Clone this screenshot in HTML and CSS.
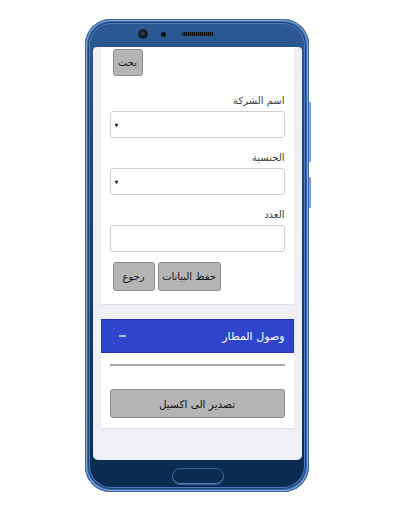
FILE: index.html
```html
<!DOCTYPE html>
<html lang="ar">
<head>
<meta charset="utf-8">
<link rel="stylesheet" href="styles.css">
<title>وصول المطار</title>
</head>
<body>
<div class="phone">
  <span class="side-btn vol"></span>
  <span class="side-btn power"></span>
  <div class="bezel-top">
    <span class="camera"></span>
    <span class="sensor"></span>
    <span class="speaker"></span>
  </div>
  <div class="screen" dir="rtl">
    <div class="card form-card">
      <div class="btn-row">
        <button class="btn btn-small">بحث</button>
      </div>
      <label class="field-label">اسم الشركة</label>
      <div class="field select"><span class="caret">▼</span></div>
      <label class="field-label">الجنسية</label>
      <div class="field select"><span class="caret">▼</span></div>
      <label class="field-label">العدد</label>
      <div class="field"></div>
      <div class="btn-row actions">
        <button class="btn btn-back">رجوع</button>
        <button class="btn btn-save">حفظ البيانات</button>
      </div>
    </div>
    <div class="panel-head">
      <span class="panel-title">وصول المطار</span>
      <span class="collapse"></span>
    </div>
    <div class="card panel-body">
      <hr class="rule">
      <button class="btn btn-wide">تصدير الى اكسيل</button>
    </div>
  </div>
  <div class="bezel-bottom">
    <span class="home"></span>
  </div>
</div>
</body>
</html>
```

FILE: styles.css
```css
html { background: #fff; }

body {
  margin: 0;
  padding-top: 19px;
  font-family: "DejaVu Sans", "Noto Sans", sans-serif;
  color: #222;
}

/* phone frame */
.phone {
  position: relative;
  width: 224px;
  height: 473px;
  margin: 0 auto;
  border-radius: 26px;
  background: linear-gradient(180deg, #2c5a95 0%, #1d4879 25%, #123a66 65%, #0b2a4e 100%);
  box-shadow: inset 0 0 0 1px #3c6aa6, inset 0 0 0 2px #88acdc, inset 0 0 0 3px #3a67a2, inset 0 0 0 4px #1d4678, inset 0 0 0 5px #4f7cb8;
  display: flex;
  flex-direction: column;
}

.side-btn {
  position: absolute;
  right: -2px;
  width: 2px;
  background: #79a2d8;
  border-radius: 0 1px 1px 0;
}
.side-btn.vol { top: 83px; height: 60px; }
.side-btn.power { top: 158px; height: 31px; }

.bezel-top {
  height: 28px;
  display: flex;
  align-items: center;
  padding: 2px 0 0 54px;
  box-sizing: border-box;
}
.camera {
  width: 8px;
  height: 8px;
  border-radius: 50%;
  background: radial-gradient(circle at 45% 45%, #3b4a5c 0, #111 55%, #0a0a0a 100%);
  box-shadow: 0 0 0 1px #0f2540;
}
.sensor {
  width: 5px;
  height: 5px;
  border-radius: 50%;
  background: #0a0a0a;
  margin-left: 14px;
}
.speaker {
  width: 32px;
  height: 4px;
  border-radius: 2px;
  background: repeating-linear-gradient(90deg, #111 0 1px, #333 1px 2px);
  margin-left: 16px;
}

.screen {
  height: 413px;
  margin: 0 7px 0 8px;
  background: #eff0f6;
  border-radius: 4px 4px 5px 5px;
  overflow: hidden;
  padding: 0 8px;
}

.bezel-bottom {
  flex: 1;
  display: flex;
  justify-content: center;
  align-items: center;
  padding-left: 2px;
}
.home {
  width: 50px;
  height: 15px;
  border-radius: 8px;
  border: 1px solid #3a659c;
  box-shadow: inset 0 -1px 0 #557fb6;
}

/* content */
.card {
  background: #fff;
  box-shadow: 0 1px 1px rgba(0, 0, 0, 0.06);
  padding: 0 9px;
}

.form-card { padding: 2px 9px 13px; }

.btn-row {
  display: flex;
  direction: ltr;
  gap: 3px;
  padding-left: 3px;
}

.btn {
  font-family: inherit;
  font-size: 10px;
  color: #111;
  background: #b5b5b5;
  border: 1px solid #8c8c8c;
  border-radius: 3px;
  height: 28px;
  padding: 0;
  cursor: pointer;
}
.btn-small { width: 30px; height: 27px; }
.btn-back { width: 42px; }
.btn-save { width: 63px; }

.field-label {
  display: block;
  font-size: 10px;
  line-height: 14px;
  color: #3a3a3a;
  margin: 13px 0 3px;
}
.btn-row + .field-label { margin-top: 18px; }

.field {
  height: 27px;
  box-sizing: border-box;
  background: #fff;
  border: 1px solid #cfcfcf;
  border-radius: 3px;
  display: flex;
  align-items: center;
  justify-content: flex-end;
  padding-left: 4px;
}
.caret {
  font-size: 5px;
  color: #222;
}

.actions { margin-top: 10px; }
.actions .btn { height: 29px; }

.panel-head {
  margin-top: 15px;
  height: 34px;
  box-sizing: border-box;
  background: #2f45cb;
  border: 1px solid #1f33b8;
  display: flex;
  align-items: center;
  justify-content: space-between;
  padding: 0 8px 0 17px;
}
.panel-title {
  color: #fff;
  font-size: 11px;
}
.collapse {
  width: 7px;
  height: 2px;
  background: #b9bccb;
}

.panel-body { padding: 11px 9px 10px; }

.rule {
  border: 0;
  height: 2px;
  background: #a9a9a9;
  margin: 0 0 23px;
}

.btn-wide {
  display: block;
  width: 100%;
  height: 29px;
  font-size: 10.5px;
}
```
